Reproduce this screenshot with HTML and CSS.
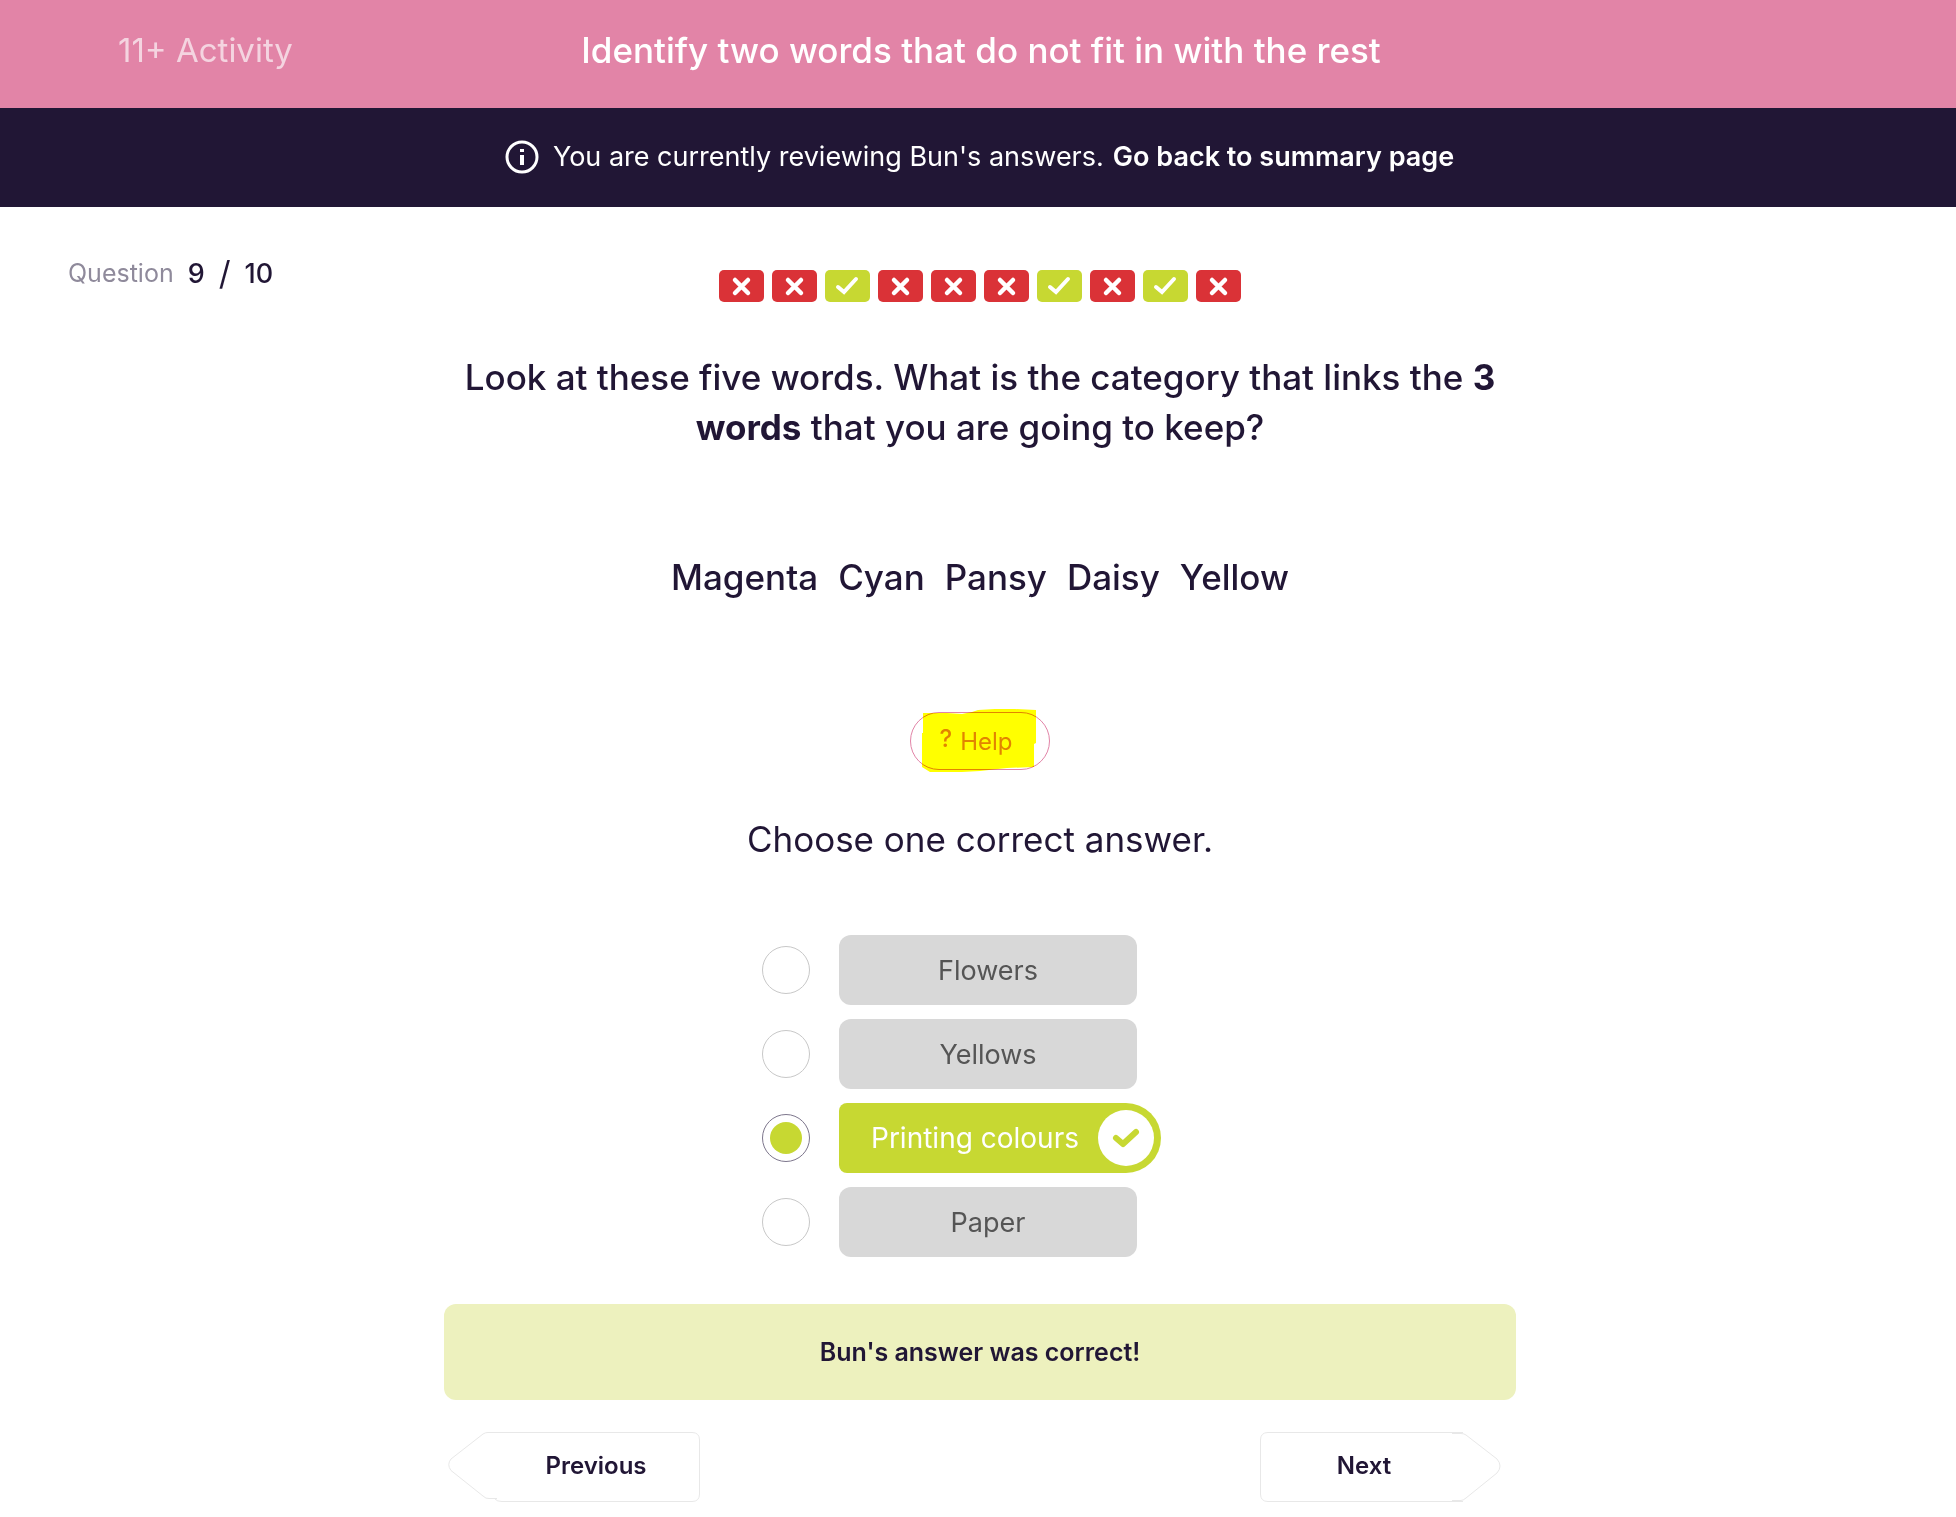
FILE: index.html
```html
<!DOCTYPE html>
<html lang="en">
<head>
    <meta charset="UTF-8">
    <meta name="viewport" content="width=device-width, initial-scale=1.0">
    <title>11+ Activity</title>
    <link rel="stylesheet" href="styles.css">
</head>
<body>
    <!-- Shared icons -->
    <svg class="sprite" aria-hidden="true">
        <symbol id="cross" viewBox="0 0 45 32">
            <path d="M16 10 L29 23 M29 10 L16 23" fill="none" stroke="#fff" stroke-width="4.500" stroke-linecap="round"/>
        </symbol>
        <symbol id="tick" viewBox="0 0 45 32">
            <path d="M13 17 L19 22 L31 9" fill="none" stroke="#fff" stroke-width="4" stroke-linecap="round"/>
        </symbol>
    </svg>

    <header class="header">
        <div class="activity">11+ Activity</div>
        <h1 class="title">Identify two words that do not fit in with the rest</h1>
    </header>

    <div class="banner">
        <svg class="info-icon" viewBox="0 0 32 32" aria-hidden="true">
            <circle cx="16" cy="16" r="15" fill="none" stroke="#fff" stroke-width="3"/>
            <path d="M14 8h4v3h-4z M14 14h4v10h-4z" fill="#fff"/>
        </svg>
        <span>You are currently reviewing Bun's answers.</span>
        <a href="#" class="banner-link">Go back to summary page</a>
    </div>

    <main class="main">
        <div class="progress">
            <div class="counter">
                <span class="counter-label">Question</span>
                <span>9</span>
                <span class="slash">/</span>
                <span>10</span>
            </div>
            <div class="marks">
                <svg class="mark wrong"><use href="#cross"/></svg>
                <svg class="mark wrong"><use href="#cross"/></svg>
                <svg class="mark right"><use href="#tick"/></svg>
                <svg class="mark wrong"><use href="#cross"/></svg>
                <svg class="mark wrong"><use href="#cross"/></svg>
                <svg class="mark wrong"><use href="#cross"/></svg>
                <svg class="mark right"><use href="#tick"/></svg>
                <svg class="mark wrong"><use href="#cross"/></svg>
                <svg class="mark right"><use href="#tick"/></svg>
                <svg class="mark wrong"><use href="#cross"/></svg>
            </div>
        </div>

        <div class="content">
            <p class="question">Look at these five words. What is the category that links the <b>3</b> <b>words</b> that you are going to keep?</p>

            <div class="words">
                <span>Magenta</span>
                <span>Cyan</span>
                <span>Pansy</span>
                <span>Daisy</span>
                <span>Yellow</span>
            </div>

            <button type="button" class="help">
                <span class="help-mark">?</span>
                <span>Help</span>
                <svg class="highlight" viewBox="0 -4 140 66" aria-hidden="true">
                    <path d="M13 1 H37 L52 2 L62 0 L68 -2 L85 -3 H105 L126 -2 V31 L124 32 V55 L97 56 L79 58 L70 59 L52 60 H20 L12 55 V21 H13 Z" fill="#ff0"/>
                </svg>
            </button>

            <fieldset class="answers">
                <legend class="instruction">Choose one correct answer.</legend>
                <label class="answer">
                    <input type="radio" name="answer" class="radio">
                    <span class="option">Flowers</span>
                </label>
                <label class="answer">
                    <input type="radio" name="answer" class="radio">
                    <span class="option">Yellows</span>
                </label>
                <label class="answer">
                    <input type="radio" name="answer" class="radio" checked>
                    <span class="option correct">
                        Printing colours
                        <svg class="option-tick" viewBox="0 0 56 56" aria-hidden="true">
                            <circle cx="28" cy="28" r="28" fill="#fff"/>
                            <path d="M18 28 L25 34 L38 22" fill="none" stroke="#c7d832" stroke-width="6" stroke-linecap="round" stroke-linejoin="round"/>
                        </svg>
                    </span>
                </label>
                <label class="answer">
                    <input type="radio" name="answer" class="radio">
                    <span class="option">Paper</span>
                </label>
            </fieldset>

            <div class="result">Bun's answer was correct!</div>

            <nav class="nav">
                <button type="button" class="nav-button previous">
                    <svg class="nav-shape" viewBox="0 0 252 70" aria-hidden="true">
                        <path d="M49 .5 H244 Q251.500 .5 251.500 8 V62 Q251.500 69.500 244 69.500 H54 Q49 69.500 47 67"/>
                        <path d="M49 .5 H40 Q37 .5 35 2 L3 27 Q-1.500 32.500 3 38.500 L35 64 Q38 67 41 66.500 H49"/>
                    </svg>
                    Previous
                </button>
                <button type="button" class="nav-button next">
                    <svg class="nav-shape" viewBox="0 0 252 70" aria-hidden="true">
                        <path d="M203 .5 H8 Q.5 .5 .5 8 V62 Q.5 69.500 8 69.500 H203"/>
                        <path d="M192 1.500 H201 Q204 1.500 206 3 L237 27 Q243 34 237 41 L206 66 Q203 68.500 201 68.500 H192"/>
                    </svg>
                    Next
                </button>
            </nav>
        </div>
    </main>
</body>
</html>
```
FILE: styles.css
```css
* {
    box-sizing: border-box;
}

body {
    margin: 0;
    font-family: Inter, "Open Sans", sans-serif;
    color: #211635;
    background: #fff;
}

button {
    font-family: inherit;
    color: inherit;
    cursor: pointer;
}

.sprite {
    display: none;
}

.header {
    display: grid;
    grid-template-columns: 1fr auto 1fr;
    align-items: center;
    padding: 25px 112px 33px 118px;
    background: #e284a7;
    color: #fff;
    font-size: 33px;
    line-height: 50px;
}

.activity {
    opacity: 0.65;
}

.title {
    margin: 0;
    font-size: 35px;
    font-weight: 500;
}

.banner {
    display: flex;
    justify-content: center;
    align-items: center;
    gap: 9px;
    padding: 24px 64px 25px 68px;
    background: #211635;
    color: #fff;
    font-size: 27px;
    line-height: 50px;
}

.info-icon {
    width: 32px;
    height: 32px;
    margin-right: 6px;
    overflow: visible;
}

.banner-link {
    color: #fff;
    font-weight: 600;
    text-decoration: none;
}

.main {
    padding: 50px 64px 0 68px;
}

.progress {
    display: grid;
    grid-template-columns: 1fr auto 1fr;
}

.counter {
    display: flex;
    align-items: center;
    gap: 14px;
    height: 32px;
    font-size: 27px;
    font-weight: 500;
}

.counter-label {
    color: #8f8a9b;
    font-size: 25px;
    font-weight: 400;
}

.slash {
    font-size: 33px;
    font-weight: 400;
}

.marks {
    display: flex;
    gap: 8px;
    padding-top: 13px;
}

.mark {
    width: 45px;
    height: 32px;
    border-radius: 5px;
}

.wrong {
    background: #da3237;
}

.right {
    background: #c7d832;
}

.content {
    display: flex;
    flex-direction: column;
    align-items: center;
    max-width: 1072px;
    margin: 50px auto 0;
}

.question {
    margin: 0;
    font-size: 35px;
    font-weight: 500;
    line-height: 50px;
    text-align: center;
}

.words {
    display: flex;
    gap: 20px;
    margin-top: 100px;
    font-size: 35px;
    font-weight: 500;
    line-height: 50px;
}

.help {
    position: relative;
    display: flex;
    justify-content: center;
    align-items: center;
    gap: 8px;
    width: 140px;
    height: 58px;
    margin-top: 110px;
    padding: 0 8px 0 0;
    border: 1px solid #e284a7;
    border-radius: 29px;
    background: #fff;
    color: #e284a7;
    font-size: 24px;
}

.help-mark {
    padding-bottom: 6px;
    font-weight: 500;
}

/* Marker stroke over the help button */
.highlight {
    position: absolute;
    top: -5px;
    left: -1px;
    width: 140px;
    height: 66px;
    mix-blend-mode: multiply;
}

.answers {
    display: flex;
    flex-direction: column;
    gap: 14px;
    width: 436px;
    margin: 44px 0 0;
    padding: 0;
    border: 0;
}

.instruction {
    margin: 0 -20px 71px;
    padding: 0;
    width: 476px;
    font-size: 35px;
    line-height: 50px;
    text-align: center;
    white-space: nowrap;
}

.answer {
    display: flex;
    align-items: center;
    gap: 29px;
}

.radio {
    display: grid;
    place-items: center;
    appearance: none;
    width: 48px;
    height: 48px;
    margin: 0;
    border: 1px solid #c8c8c8;
    border-radius: 50%;
}

.radio:checked {
    border-color: #7d768c;
}

.radio:checked::before {
    content: "";
    width: 32px;
    height: 32px;
    border-radius: 50%;
    background: #c7d832;
}

.option {
    display: flex;
    justify-content: center;
    align-items: center;
    width: 298px;
    height: 70px;
    border-radius: 12px;
    background: #d8d8d8;
    color: #555;
    font-size: 27px;
}

.option.correct {
    justify-content: space-between;
    width: 322px;
    padding: 0 7px 0 32px;
    border-radius: 8px 35px 35px 8px;
    background: #c7d832;
    color: #fff;
    font-size: 28px;
}

.option-tick {
    width: 56px;
    height: 56px;
}

.result {
    width: 100%;
    margin-top: 47px;
    padding: 33px;
    border-radius: 12px;
    background: #edf1be;
    font-size: 25px;
    font-weight: 600;
    line-height: 30px;
    text-align: center;
}

.nav {
    display: flex;
    justify-content: space-between;
    width: 100%;
    margin-top: 32px;
    padding: 0 4px;
}

.nav-button {
    position: relative;
    width: 252px;
    height: 70px;
    padding: 0 0 4px;
    border: 0;
    background: none;
    font-size: 24px;
    font-weight: 600;
}

.previous {
    padding-left: 44px;
}

.next {
    padding-right: 44px;
}

.nav-shape {
    position: absolute;
    inset: 0;
    fill: none;
    stroke: #e8e8e8;
}
```
